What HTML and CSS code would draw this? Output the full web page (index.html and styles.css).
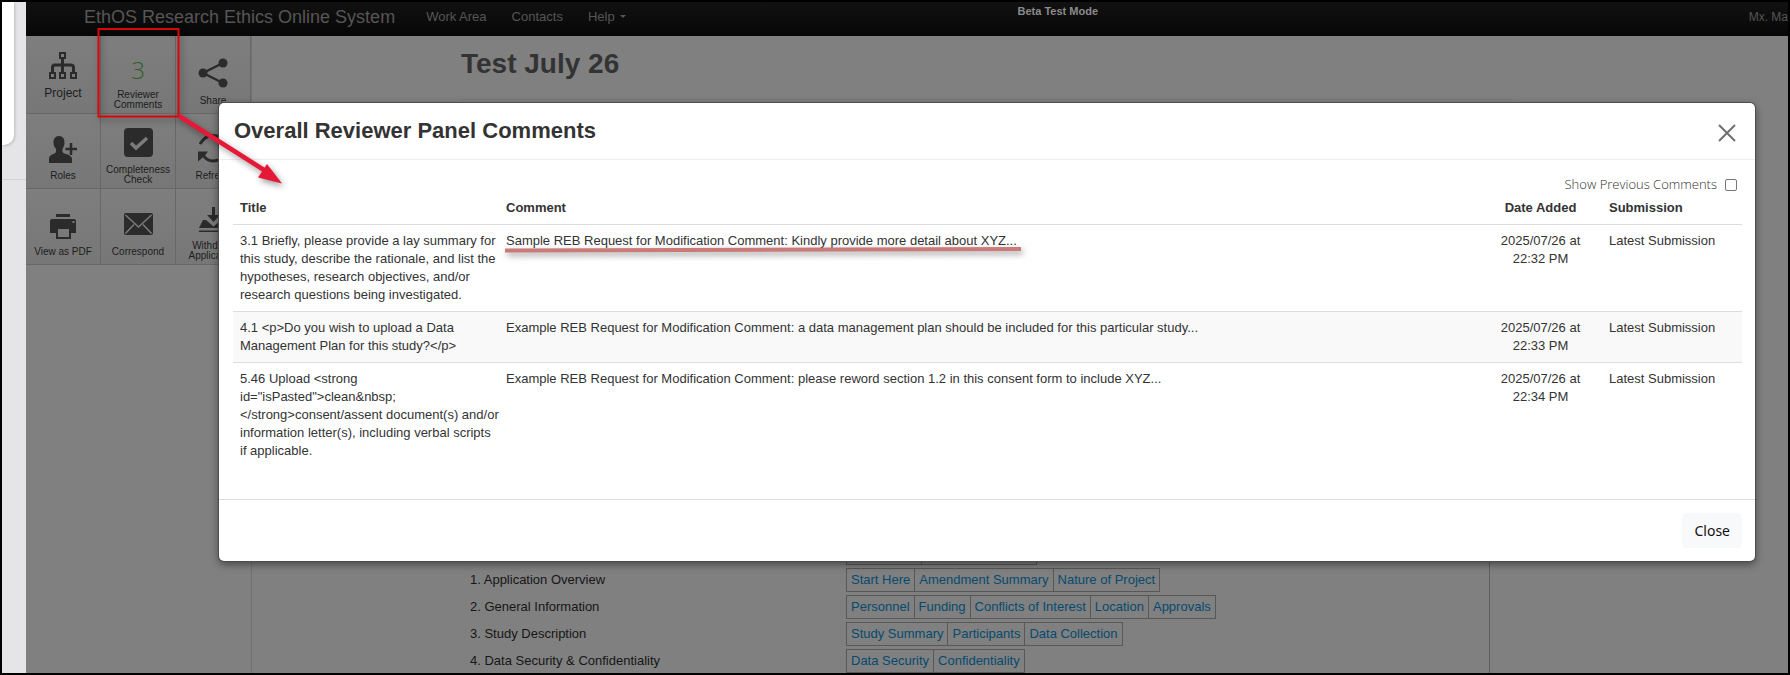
FILE: index.html
```html
<!DOCTYPE html>
<html lang="en">
<head>
<meta charset="utf-8">
<title>EthOS Research Ethics Online System</title>
<link rel="stylesheet" href="styles.css">
</head>
<body>
<div class="shell">
  <aside class="gutter"><div class="gutter-card"></div><div class="gutter-rest"></div></aside>
  <div class="app">
    <header class="navbar">
      <a class="brand" href="#">EthOS Research Ethics Online System</a>
      <nav class="nav-links">
        <a href="#">Work Area</a>
        <a href="#">Contacts</a>
        <a href="#" class="has-caret">Help</a>
      </nav>
      <strong class="beta">Beta Test Mode</strong>
      <a class="user" href="#">Mx. Ma</a>
    </header>
    <div class="columns">
      <aside class="tiles">
        <a class="tile tile-large" href="#">
          <svg width="30" height="28" viewBox="0 0 30 28" fill="none" stroke="#2b2b2b" stroke-width="2"><rect x="12" y="1" width="5" height="5"/><rect x="2" y="21" width="5" height="5"/><rect x="12" y="21" width="5" height="5"/><rect x="23" y="21" width="5" height="5"/><path stroke-width="3" d="M14.5 7v13M4.500 20v-4.500q0-2.500 2.500-2.500h15.500q3 0 3 2.500v4.500"/></svg>
          <span>Project</span>
        </a>
        <a class="tile tile-two-line" href="#"><b class="count">3</b><span>Reviewer<br>Comments</span></a>
        <a class="tile" href="#">
          <svg width="30" height="30" viewBox="0 0 30 30" fill="#2b2b2b"><path d="M25 5L5 15l20 10" fill="none" stroke="#2b2b2b" stroke-width="2.500"/><circle cx="25" cy="5" r="4.500"/><circle cx="5" cy="15" r="4.500"/><circle cx="25" cy="25" r="4.500"/></svg>
          <span>Share</span>
        </a>
        <a class="tile" href="#">
          <svg width="28" height="27" viewBox="0 0 28 27" fill="#2b2b2b"><path d="M10 0c4 0 5.500 3 5.500 6.500 0 3-1 4.500-2 6.500v3c1 2.500 9.500 2 9.500 7v4H0v-4c0-5 6-4.500 7-7v-3C5.500 11 4.500 9.500 4.500 6.500 4.500 3 6 0 10 0z"/><path d="M22 7v12M16.500 13H28" stroke="#2b2b2b" stroke-width="2.500"/></svg>
          <span>Roles</span>
        </a>
        <a class="tile tile-two-line" href="#">
          <svg width="29" height="29" viewBox="0 0 29 29"><rect width="29" height="29" rx="4" fill="#2b2b2b"/><path d="M7 15l5 5L23 10" fill="none" stroke="#7b7b7b" stroke-width="3.500"/></svg>
          <span>Completeness<br>Check</span>
        </a>
        <a class="tile" href="#">
          <svg width="30" height="29" viewBox="0 0 30 29" fill="none" stroke="#2b2b2b" stroke-width="3"><path d="M2 10Q7 1.500 15 1.500q8 0 12 8M5 21q4 6 10 6 8 0 13-8"/><path d="M0 17.500h10l-3 4-7 6z" fill="#2b2b2b" stroke="none"/><path d="M30 11H20l3-4 7-6z" fill="#2b2b2b" stroke="none"/></svg>
          <span>Refresh</span>
        </a>
        <a class="tile" href="#">
          <svg width="26" height="25" viewBox="0 0 26 25" fill="#2b2b2b"><path d="M6 0h14v3H6z"/><path fill-rule="evenodd" d="M0 7q0-2 2-2h22q2 0 2 2v12h-5v6H6v-6H0zM8 15v8h11v-8zM22.500 7v2h2V7z"/></svg>
          <span>View as PDF</span>
        </a>
        <a class="tile tile-mail" href="#">
          <svg width="29" height="22" viewBox="0 0 29 22"><rect width="29" height="22" rx="2" fill="#2b2b2b"/><path d="M1.500 2L14.500 14 27.500 2M1.500 20.500l8.500-9M27.500 20.500L19 11.500" fill="none" stroke="#7b7b7b" stroke-width="1.500"/></svg>
          <span>Correspond</span>
        </a>
        <a class="tile tile-two-line" href="#">
          <svg width="29" height="26" viewBox="0 0 29 26" fill="#2b2b2b"><path d="M13 0h3v8h5l-6.500 7L8 8h5z"/><path d="M0 21l4-8h3l7.500 6.500L22 13h3l4 8z"/><path d="M0 23.500h29V25H0z"/></svg>
          <span>Withdraw<br>Application</span>
        </a>
      </aside>
      <main class="content">
        <h1>Test July 26</h1>
        <section class="outline">
          <div class="outline-row"><span></span><div class="links"><a href="#">Project Info</a><a href="#">Project Status Info</a></div></div>
          <div class="outline-row"><span>1. Application Overview</span><div class="links"><a href="#">Start Here</a><a href="#">Amendment Summary</a><a href="#">Nature of Project</a></div></div>
          <div class="outline-row"><span>2. General Information</span><div class="links"><a href="#">Personnel</a><a href="#">Funding</a><a href="#">Conflicts of Interest</a><a href="#">Location</a><a href="#">Approvals</a></div></div>
          <div class="outline-row"><span>3. Study Description</span><div class="links"><a href="#">Study Summary</a><a href="#">Participants</a><a href="#">Data Collection</a></div></div>
          <div class="outline-row"><span>4. Data Security &amp; Confidentiality</span><div class="links"><a href="#">Data Security</a><a href="#">Confidentiality</a></div></div>
        </section>
      </main>
    </div>
  </div>

  <div class="modal" role="dialog" aria-labelledby="modal-title">
    <div class="modal-header">
      <h2 id="modal-title">Overall Reviewer Panel Comments</h2>
      <button class="dismiss" type="button" aria-label="Close dialog"><svg width="18" height="18" viewBox="0 0 18 18" stroke="#6f6f6f" stroke-width="2"><path d="M1 1l16 16M17 1L1 17"/></svg></button>
    </div>
    <div class="modal-body">
      <div class="toggle"><label for="previous">Show Previous Comments</label><input id="previous" type="checkbox"></div>
      <table>
        <thead><tr><th class="col-title">Title</th><th>Comment</th><th class="col-date">Date Added</th><th class="col-sub">Submission</th></tr></thead>
        <tbody>
          <tr><td class="title">3.1 Briefly, please provide a lay summary for<br>this study, describe the rationale, and list the<br>hypotheses, research objectives, and/or<br>research questions being investigated.</td><td>Sample REB Request for Modification Comment: Kindly provide more detail about XYZ...</td><td class="date">2025/07/26 at 22:32 PM</td><td>Latest Submission</td></tr>
          <tr><td class="title">4.1 &lt;p&gt;Do you wish to upload a Data<br>Management Plan for this study?&lt;/p&gt;</td><td>Example REB Request for Modification Comment: a data management plan should be included for this particular study...</td><td class="date">2025/07/26 at 22:33 PM</td><td>Latest Submission</td></tr>
          <tr><td class="title">5.46 Upload &lt;strong<br>id="isPasted"&gt;clean&amp;nbsp;<br>&lt;/strong&gt;consent/assent document(s) and/or<br>information letter(s), including verbal scripts<br>if applicable.</td><td>Example REB Request for Modification Comment: please reword section 1.2 in this consent form to include XYZ...</td><td class="date">2025/07/26 at 22:34 PM</td><td>Latest Submission</td></tr>
        </tbody>
      </table>
    </div>
    <div class="modal-footer"><button class="close" type="button">Close</button></div>
  </div>

  <svg class="markup" width="1100" height="300" viewBox="0 0 1100 300" aria-hidden="true">
    <g class="markup-shadow"><rect x="98.500" y="29" width="80" height="87.500" fill="none" stroke="#d90808" stroke-width="2"/></g>
    <g class="markup-shadow"><path d="M179 116L264 170" stroke="#e51937" stroke-width="4.500"/><path d="M282 183.500L258 177.500 267 164z" fill="#e51937"/></g>
    <g class="markup-shadow"><path d="M505 250.500L1021 249" stroke="#cb7a7a" stroke-width="4"/></g>
  </svg>
</div>
</body>
</html>
```
FILE: styles.css
```css
* { box-sizing: border-box; }
body {
  margin: 0;
  font: 13px/18px "Liberation Sans", Arial, sans-serif;
  color: #333;
}
a { color: inherit; text-decoration: none; }
.shell {
  position: relative;
  display: flex;
  height: 100vh;
  overflow: hidden;
  border: 2px solid #000;
  background: #808080;
}
.gutter { width: 24px; flex: none; background: #e5e5e8; }
.gutter-card {
  width: 12px;
  height: 143px;
  background: #fff;
  border-bottom-right-radius: 10px;
  box-shadow: 1px 1px 3px #bbb;
}
.gutter-rest { margin-top: 34px; border-top: 1px solid #d3d3d6; }
.app { flex: 1; min-width: 0; display: flex; flex-direction: column; }

.navbar {
  display: flex;
  align-items: center;
  flex: none;
  height: 34px;
  padding: 0 0 4px 58px;
  background: linear-gradient(#111, #070707);
  color: #565656;
  white-space: nowrap;
}
.brand { font-size: 18px; line-height: 30px; }
.nav-links { display: flex; gap: 25px; margin-left: 31px; }
.has-caret::after {
  content: "";
  display: inline-block;
  margin-left: 5px;
  vertical-align: 3px;
  border: 3px solid transparent;
  border-top-color: #565656;
  border-bottom: 0;
}
.beta {
  margin: 0 auto 0 23%;
  padding-bottom: 12px;
  font-size: 11px;
  line-height: 14px;
  color: #8b8b8b;
}
.user { font-size: 12px; }

.columns { display: flex; flex: 1; min-height: 0; }
.tiles {
  flex: none;
  width: 226px;
  display: grid;
  grid-template-columns: repeat(3, 1fr);
  grid-template-rows: 78px 75px 76px;
  align-content: start;
  border-right: 1px solid #727272;
}
.tile {
  display: flex;
  flex-direction: column;
  align-items: center;
  justify-content: flex-end;
  gap: 8px;
  padding-bottom: 7px;
  background: linear-gradient(#7e7e7e, #777);
  border-right: 1px solid #686868;
  border-bottom: 1px solid #686868;
  font-size: 10px;
  line-height: 10px;
  text-align: center;
  color: #1c1c1c;
}
.tile-large { font-size: 12px; line-height: 14px; padding-bottom: 13px; gap: 6px; }
.tile-two-line { padding-bottom: 3px; }
.tile-mail { gap: 12px; }
.count { font: 300 24px/24px "Open Sans", sans-serif; color: #2f5f24; }

.content { flex: 1; display: flex; flex-direction: column; justify-content: space-between; }
.content h1 {
  margin: 10px 275px 0 207px;
  padding: 0 2px 17px;
  border-bottom: 1px solid #787878;
  font-size: 28px;
  line-height: 36px;
  color: #333;
}
.outline {
  margin: 0 298px -3px 218px;
  padding-top: 20px;
  border-right: 1px solid #606060;
  color: #161616;
}
.outline-row { display: grid; grid-template-columns: 376px 1fr; height: 27px; }
.outline-row > span { line-height: 24px; }
.links { display: flex; height: 24px; }
.links a {
  border: 1px solid #585858;
  margin-right: -1px;
  padding: 0 4px;
  line-height: 22px;
  color: #064a6e;
}

.modal {
  position: absolute;
  top: 101px;
  left: 217px;
  right: 33px;
  background: #fff;
  border-radius: 5px;
  box-shadow: 0 0 0 1px #4d4d4d, 0 3px 9px rgba(0, 0, 0, .5);
}
.modal-header {
  display: flex;
  justify-content: space-between;
  align-items: center;
  height: 57px;
  padding: 0 19px 0 15px;
  border-bottom: 1px solid #eee;
}
.modal-header h2 { margin: 0; font-size: 22px; line-height: 30px; }
.dismiss { display: flex; padding: 0; border: 0; background: none; margin-top: 4px; }
.modal-body { padding: 15px 13px 32px 14px; }
.toggle {
  display: flex;
  justify-content: flex-end;
  align-items: center;
  gap: 8px;
  height: 18px;
  padding-right: 5px;
  font: 300 13px/18px "Open Sans", sans-serif;
}
.toggle input {
  appearance: none;
  width: 12px;
  height: 12px;
  margin: 2px 0 0;
  border: 1px solid #767676;
  border-radius: 2px;
  background: #fff;
}
table { width: 100%; border-collapse: collapse; table-layout: fixed; }
th { padding: 6px 7px 7px; text-align: left; }
td { padding: 7px; border-top: 1px solid #ddd; vertical-align: top; }
tbody tr:nth-child(even) { background: #f9f9f9; }
.col-title { width: 266px; }
.col-date { width: 123px; padding-left: 0; padding-right: 0; text-align: center; }
.col-sub { width: 140px; }
.title { padding-right: 0; white-space: nowrap; }
.date { padding: 7px 20px; text-align: center; }
.modal-footer {
  display: flex;
  justify-content: flex-end;
  padding: 13px;
  border-top: 1px solid #ddd;
}
.close {
  padding: 7px 12px;
  border: 0;
  border-radius: 4px;
  background: #f8f9fa;
  font: 14px/21px "Noto Sans", sans-serif;
  color: #111;
}
.markup { position: absolute; top: -2px; left: -2px; pointer-events: none; }
.markup-shadow { filter: drop-shadow(2px 3px 3px rgba(0, 0, 0, .4)); }
```
